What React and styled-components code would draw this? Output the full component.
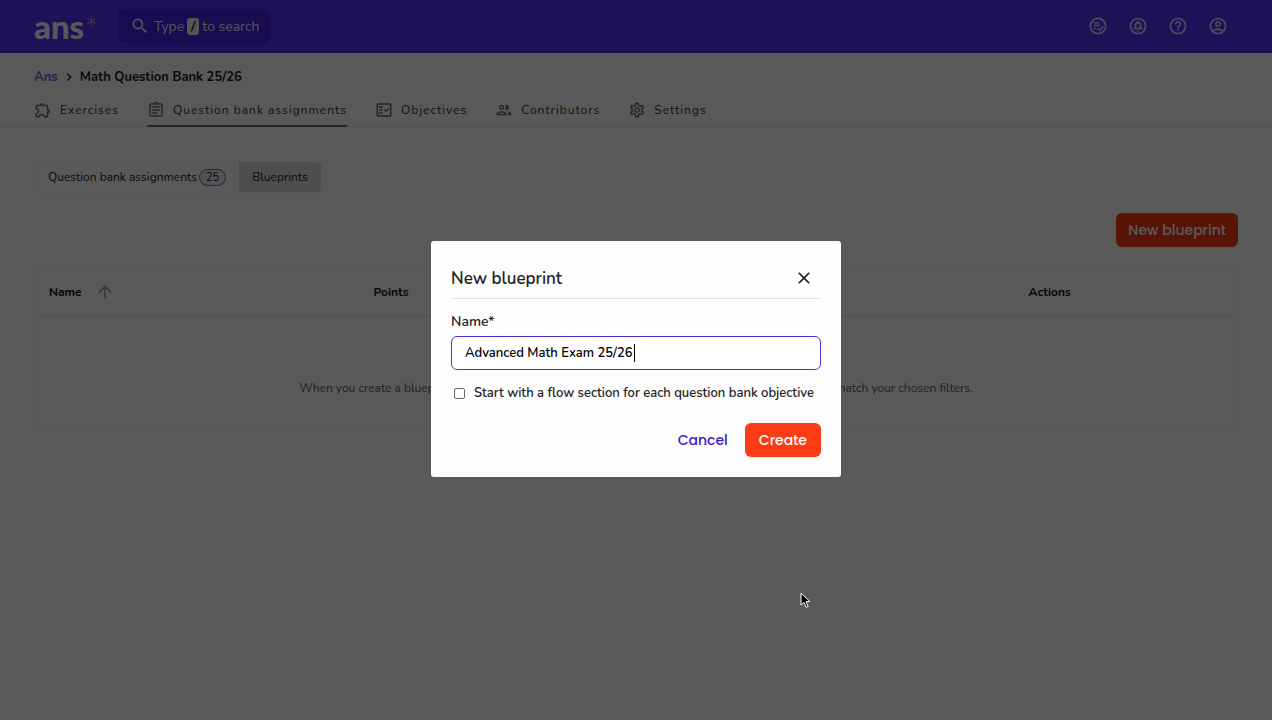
import React from "react";
import styled, { createGlobalStyle } from "styled-components";
import {
  MdSearch,
  MdHelpOutline,
  MdOutlineAccountCircle,
  MdOutlineCircleNotifications,
  MdChevronRight,
  MdOutlineExtension,
  MdOutlineAssignment,
  MdOutlineFactCheck,
  MdOutlineGroup,
  MdOutlineSettings,
  MdArrowUpward,
  MdClose,
} from "react-icons/md";

const GlobalStyle = createGlobalStyle`
  *, *::before, *::after { box-sizing: border-box; }
  body { margin: 0; background: #fff; }
  body, button, input { font-family: Nunito, Lato, "Open Sans", sans-serif; }
  a { color: inherit; text-decoration: none; }
`;

const Page = styled.div`
  min-height: 100vh;
  color: #222;
  font-size: 14px;
`;

const Header = styled.header`
  display: flex;
  align-items: center;
  height: 53px;
  padding: 0 44px 1px 34px;
  background: #5533fd;
`;

const Logo = styled.a`
  display: flex;
  width: 62px;
  margin-right: 22px;
  color: #fff;
  font: 900 33px/30px Lato, sans-serif;
  svg { flex: none; margin: 5px 0 0 3px; }
`;

const SearchButton = styled.button`
  display: flex;
  align-items: center;
  height: 34px;
  padding: 0 12px;
  border: 0;
  border-radius: 6px;
  background: #4520e4;
  color: #f0edff;
  font-size: 14px;
  svg { margin-right: 4px; }
`;

const Key = styled.kbd`
  margin: 0 3px;
  padding: 0 3px;
  border-radius: 3px;
  background: #f4f4f4;
  color: #111;
  font: 700 13px/17px Lato, sans-serif;
`;

const HeaderActions = styled.nav`
  display: flex;
  gap: 20px;
  margin-left: auto;
`;

const IconButton = styled.button`
  display: grid;
  place-items: center;
  width: 20px;
  height: 20px;
  padding: 0;
  border: 0;
  background: none;
  color: ${(p) => p.$color || "#ddd8ff"};
`;

const Breadcrumb = styled.nav`
  display: flex;
  align-items: center;
  height: 40px;
  padding: 7px 34px 0;
  font-size: 13px;
  font-weight: 700;
  a { color: #5566e8; }
  svg { margin: 0 3px; }
`;

const Tabs = styled.nav`
  display: flex;
  gap: 28px;
  height: 34px;
  padding: 0 34px;
  border-bottom: 1px solid #e6e6e6;
`;

const Tab = styled.a`
  display: flex;
  align-items: center;
  gap: 8px;
  height: 34px;
  padding-top: 2px;
  color: #33363c;
  font-size: 12px;
  letter-spacing: 1px;
  border-bottom: 2px solid ${(p) => (p.$active ? "#6c727e" : "transparent")};
  svg { color: #6a707d; }
`;

const Content = styled.main`
  padding: 34px 34px 0;
`;

const Segments = styled.div`
  display: flex;
  width: max-content;
  border: 1px solid #f6f6f6;
  border-radius: 6px;
  overflow: hidden;
`;

const Segment = styled.button`
  display: flex;
  align-items: center;
  gap: 2px;
  height: 30px;
  padding: 0 13px;
  border: 0;
  background: ${(p) => (p.$active ? "#dedede" : "#fff")};
  color: #222;
  font-size: 12px;
`;

const Count = styled.span`
  padding: 0 6px;
  border: 1px solid #6a58f0;
  border-radius: 9px;
  background: #eeecfa;
  font-size: 11px;
  line-height: 15px;
`;

const Toolbar = styled.div`
  display: flex;
  justify-content: flex-end;
  margin: 20px 0;
`;

const Button = styled.button`
  height: 34px;
  padding: 0 ${(p) => (p.$wide ? 12 : 14)}px;
  border: 0;
  border-radius: 6px;
  background: ${(p) => (p.$text ? "transparent" : "#fb3c14")};
  color: ${(p) => (p.$text ? "#3a17c8" : "#fff")};
  font-family: Poppins, Lato, sans-serif;
  font-size: 14px;
  font-weight: 500;
`;

const Table = styled.table`
  width: 100%;
  table-layout: fixed;
  border: 1px solid #f0f0f0;
  border-radius: 8px;
  border-spacing: 0;
  th {
    height: 48px;
    padding: 0 14px;
    border-bottom: 1px solid #e8e8e8;
    font-size: 12px;
    text-align: left;
    color: #111;
  }
  td {
    height: 114px;
    padding: 30px 0 0;
    text-align: center;
    vertical-align: middle;
    font-size: 12px;
    color: #5d6270;
  }
`;

const Column = styled.col`
  width: ${(p) => p.$width};
`;

const Sortable = styled.span`
  display: flex;
  align-items: center;
  gap: 13px;
  svg { color: #aaa; }
`;

const Overlay = styled.div`
  position: fixed;
  inset: 0;
  display: grid;
  place-items: center;
  padding-bottom: 2px;
  background: rgba(0, 0, 0, 0.65);
`;

const Dialog = styled.form`
  width: 410px;
  padding: 20px;
  border-radius: 3px;
  background: #fdfdfd;
  color: #222;
`;

const DialogHeader = styled.div`
  display: flex;
  align-items: center;
  justify-content: space-between;
  height: 38px;
  padding: 0 7px 3px 0;
  border-bottom: 1px solid #e2e2e2;
  h2 { margin: 0; font-size: 17px; font-weight: 600; }
`;

const FieldLabel = styled.label`
  display: block;
  margin: 13px 0 5px;
  font-size: 14px;
  line-height: 19px;
  font-weight: 600;
`;

const InputWrap = styled.div`
  position: relative;
`;

const Caret = styled.span`
  position: absolute;
  top: 8px;
  left: 183px;
  width: 1px;
  height: 18px;
  background: #000;
`;

const TextInput = styled.input`
  display: block;
  width: 100%;
  height: 34px;
  padding: 0 13px;
  border: 1px solid #4b2fd0;
  border-radius: 6px;
  outline: 0;
  background: #fff;
  color: #000;
  font-size: 13px;
  font-weight: 600;
  caret-color: transparent;
`;

const CheckLabel = styled.label`
  display: flex;
  align-items: center;
  gap: 9px;
  height: 20px;
  margin-top: 13px;
  font-size: 13px;
  font-weight: 600;
  white-space: nowrap;
`;

const Checkbox = styled.input`
  appearance: none;
  flex: none;
  width: 11px;
  height: 11px;
  margin: 0 0 0 3px;
  border: 1px solid #666;
  border-radius: 2px;
  background: #fff;
`;

const DialogActions = styled.div`
  display: flex;
  justify-content: flex-end;
  gap: 3px;
  margin-top: 20px;
`;

const Pointer = styled.svg`
  position: fixed;
  left: 799px;
  top: 592px;
`;

const GradingIcon = () => (
  <svg width="20" height="20" viewBox="0 0 24 24" fill="none" stroke="currentColor" strokeWidth="2">
    <circle cx="12" cy="12" r="9.2" />
    <path d="M7 8.2h7M7 11.4h7M7 14.6h2.5M11.8 15l2.2 2.2L18.5 12.6" strokeWidth="1.7" />
  </svg>
);

const LogoStar = () => (
  <svg width="9" height="10" viewBox="0 0 9 10" stroke="#e08a78" strokeWidth="1.1" aria-hidden="true">
    <path d="M4.5 0v10M.4 2.5l8.2 5M.4 7.5l8.2-5" />
  </svg>
);

const tabs = [
  ["Exercises", MdOutlineExtension],
  ["Question bank assignments", MdOutlineAssignment],
  ["Objectives", MdOutlineFactCheck],
  ["Contributors", MdOutlineGroup],
  ["Settings", MdOutlineSettings],
];

export default function App() {
  return (
    <Page>
      <GlobalStyle />
      <Header>
        <Logo href="#">ans<LogoStar /></Logo>
        <SearchButton><MdSearch size={20} />Type<Key>/</Key>to search</SearchButton>
        <HeaderActions>
          <IconButton aria-label="Grading"><GradingIcon /></IconButton>
          <IconButton aria-label="Notifications"><MdOutlineCircleNotifications size={20} /></IconButton>
          <IconButton aria-label="Help"><MdHelpOutline size={20} /></IconButton>
          <IconButton aria-label="Account"><MdOutlineAccountCircle size={20} /></IconButton>
        </HeaderActions>
      </Header>
      <Breadcrumb>
        <a href="#">Ans</a><MdChevronRight size={16} /><span>Math Question Bank 25/26</span>
      </Breadcrumb>
      <Tabs>
        {tabs.map(([name, Icon]) => (
          <Tab href="#" key={name} $active={name === "Question bank assignments"}>
            <Icon size={18} />{name}
          </Tab>
        ))}
      </Tabs>
      <Content>
        <Segments>
          <Segment>Question bank assignments<Count>25</Count></Segment>
          <Segment $active>Blueprints</Segment>
        </Segments>
        <Toolbar><Button $wide>New blueprint</Button></Toolbar>
        <Table>
          <colgroup><Column $width="27%" /><Column $width="54.5%" /><Column /></colgroup>
          <thead>
            <tr>
              <th><Sortable>Name<MdArrowUpward size={20} /></Sortable></th>
              <th>Points</th>
              <th>Actions</th>
            </tr>
          </thead>
          <tbody>
            <tr><td colSpan={3}>When you create a blueprint, it will appear here. It may also be that no existing blueprints currently match your chosen filters.</td></tr>
          </tbody>
        </Table>
      </Content>
      <Overlay>
        <Dialog role="dialog" aria-modal="true" aria-labelledby="dialog-title" onSubmit={(e) => e.preventDefault()}>
          <DialogHeader>
            <h2 id="dialog-title">New blueprint</h2>
            <IconButton type="button" aria-label="Close" $color="#222"><MdClose size={20} /></IconButton>
          </DialogHeader>
          <FieldLabel htmlFor="name">Name*</FieldLabel>
          <InputWrap>
            <TextInput id="name" defaultValue="Advanced Math Exam 25/26" autoFocus />
            <Caret />
          </InputWrap>
          <CheckLabel><Checkbox type="checkbox" />Start with a flow section for each question bank objective</CheckLabel>
          <DialogActions>
            <Button type="button" $text>Cancel</Button>
            <Button type="submit">Create</Button>
          </DialogActions>
        </Dialog>
      </Overlay>
      <Pointer width="12" height="17" viewBox="0 0 12 17" aria-hidden="true">
        <path d="M2 1v12l3-2.6 2.2 4.9 2-.9L7 9.6h4z" fill="#000" stroke="#fff" />
      </Pointer>
    </Page>
  );
}
